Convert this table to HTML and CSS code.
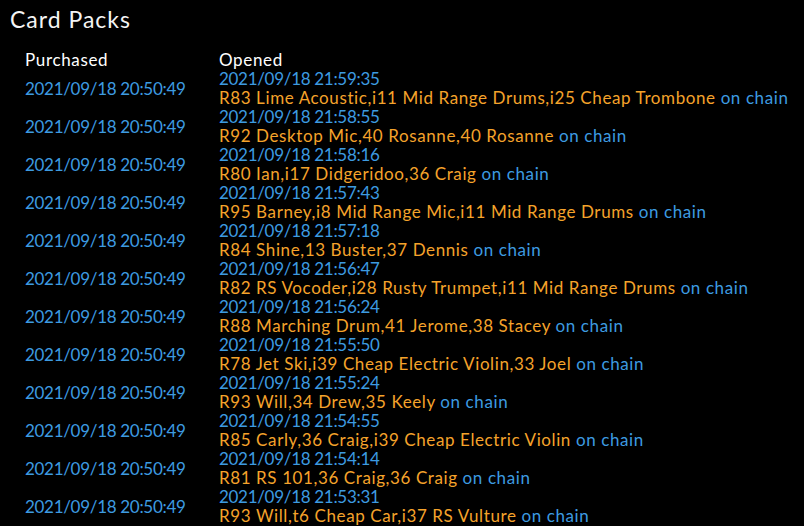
FILE: index.html
```html
<!DOCTYPE html>
<html>
<head>
<meta charset="utf-8">
<link rel="stylesheet" href="styles.css">
</head>
<body>
<h1 class="title">Card Packs</h1>
<div class="packs">
  <div class="head">Purchased</div><div class="head">Opened</div>

  <div class="purchased">2021/09/18 20:50:49</div>
  <div class="opened"><div class="date">2021/09/18 21:59:35</div><div class="cards">R83 Lime Acoustic,i11 Mid Range Drums,i25 Cheap Trombone <span class="chain">on chain</span></div></div>

  <div class="purchased">2021/09/18 20:50:49</div>
  <div class="opened"><div class="date">2021/09/18 21:58:55</div><div class="cards">R92 Desktop Mic,40 Rosanne,40 Rosanne <span class="chain">on chain</span></div></div>

  <div class="purchased">2021/09/18 20:50:49</div>
  <div class="opened"><div class="date">2021/09/18 21:58:16</div><div class="cards">R80 Ian,i17 Didgeridoo,36 Craig <span class="chain">on chain</span></div></div>

  <div class="purchased">2021/09/18 20:50:49</div>
  <div class="opened"><div class="date">2021/09/18 21:57:43</div><div class="cards">R95 Barney,i8 Mid Range Mic,i11 Mid Range Drums <span class="chain">on chain</span></div></div>

  <div class="purchased">2021/09/18 20:50:49</div>
  <div class="opened"><div class="date">2021/09/18 21:57:18</div><div class="cards">R84 Shine,13 Buster,37 Dennis <span class="chain">on chain</span></div></div>

  <div class="purchased">2021/09/18 20:50:49</div>
  <div class="opened"><div class="date">2021/09/18 21:56:47</div><div class="cards">R82 RS Vocoder,i28 Rusty Trumpet,i11 Mid Range Drums <span class="chain">on chain</span></div></div>

  <div class="purchased">2021/09/18 20:50:49</div>
  <div class="opened"><div class="date">2021/09/18 21:56:24</div><div class="cards">R88 Marching Drum,41 Jerome,38 Stacey <span class="chain">on chain</span></div></div>

  <div class="purchased">2021/09/18 20:50:49</div>
  <div class="opened"><div class="date">2021/09/18 21:55:50</div><div class="cards">R78 Jet Ski,i39 Cheap Electric Violin,33 Joel <span class="chain">on chain</span></div></div>

  <div class="purchased">2021/09/18 20:50:49</div>
  <div class="opened"><div class="date">2021/09/18 21:55:24</div><div class="cards">R93 Will,34 Drew,35 Keely <span class="chain">on chain</span></div></div>

  <div class="purchased">2021/09/18 20:50:49</div>
  <div class="opened"><div class="date">2021/09/18 21:54:55</div><div class="cards">R85 Carly,36 Craig,i39 Cheap Electric Violin <span class="chain">on chain</span></div></div>

  <div class="purchased">2021/09/18 20:50:49</div>
  <div class="opened"><div class="date">2021/09/18 21:54:14</div><div class="cards">R81 RS 101,36 Craig,36 Craig <span class="chain">on chain</span></div></div>

  <div class="purchased">2021/09/18 20:50:49</div>
  <div class="opened"><div class="date">2021/09/18 21:53:31</div><div class="cards">R93 Will,t6 Cheap Car,i37 RS Vulture <span class="chain">on chain</span></div></div>
</div>
</body>
</html>
```
FILE: styles.css
```css
html, body {
  margin: 0;
  padding: 0;
  background: #000;
}
body {
  font-family: "Lato", "Open Sans", sans-serif;
  color: #fff;
  padding: 4px 0 0 10px;
  overflow: hidden;
}
.title {
  margin: 0;
  font-size: 23px;
  font-weight: 400;
  line-height: 30px;
  letter-spacing: 1px;
  color: #f4f4f4;
}
.packs {
  display: grid;
  grid-template-columns: 194px auto;
  padding: 16px 0 0 15px;
  font-size: 17px;
  line-height: 19px;
}
.head {
  color: #fff;
  line-height: 19px;
  letter-spacing: 0.65px;
}
.purchased {
  color: #3d9be0;
  display: flex;
  align-items: center;
  letter-spacing: -0.3px;
}
.opened {
  white-space: nowrap;
}
.date {
  color: #3d9be0;
  letter-spacing: -0.3px;
}
.cards {
  color: #f5a32b;
  letter-spacing: 0.6px;
}
.chain {
  color: #3d9be0;
}
```
